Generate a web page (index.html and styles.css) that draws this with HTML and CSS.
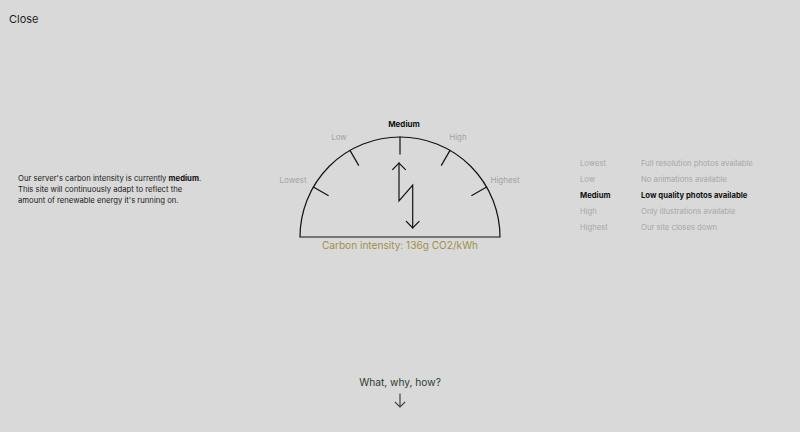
FILE: index.html
```html
<!DOCTYPE html>
<html lang="en">
<head>
<meta charset="utf-8">
<title>Carbon intensity</title>
<link rel="stylesheet" href="styles.css">
</head>
<body>
<div class="page">
  <header class="top">
    <a class="close" href="#">Close</a>
  </header>
  <main class="main">
    <section class="intro">
      <p>Our server's carbon intensity is currently <b>medium</b>.<br>This site will continuously adapt to reflect the<br>amount of renewable energy it's running on.</p>
    </section>
    <section class="gauge">
      <svg class="gauge-svg" width="260" height="140" viewBox="0 0 260 140" xmlns="http://www.w3.org/2000/svg">
        <g fill="none" stroke="#111" stroke-width="1.2" stroke-linecap="square">
          <path d="M30 125 A100 100 0 0 1 230 125 Z"/>
          <line x1="130" y1="25" x2="130" y2="42"/>
          <line x1="43.4" y1="75" x2="58.1" y2="83.5"/>
          <line x1="80" y1="38.4" x2="88.5" y2="53.1"/>
          <line x1="180" y1="38.4" x2="171.5" y2="53.1"/>
          <line x1="216.6" y1="75" x2="201.9" y2="83.5"/>
          <polyline points="129,51 129,89 142.7,73 142.7,116" stroke-linejoin="miter"/>
          <polyline points="122.7,57.5 129,51 135.3,57.5"/>
          <polyline points="136.4,109.5 142.7,116 149,109.5"/>
        </g>
        <g class="lbl" text-anchor="middle">
          <text x="134" y="15" class="on">Medium</text>
          <text x="69" y="28">Low</text>
          <text x="188" y="28">High</text>
          <text x="23" y="71">Lowest</text>
          <text x="235" y="71">Highest</text>
        </g>
        <text class="intensity" x="130" y="136.5" text-anchor="middle">Carbon intensity: 136g CO2/kWh</text>
      </svg>
    </section>
    <section class="levels">
      <ul class="level-list">
        <li><span class="lv">Lowest</span><span class="ds">Full resolution photos available</span></li>
        <li><span class="lv">Low</span><span class="ds">No animations available</span></li>
        <li class="current"><span class="lv">Medium</span><span class="ds">Low quality photos available</span></li>
        <li><span class="lv">High</span><span class="ds">Only illustrations available</span></li>
        <li><span class="lv">Highest</span><span class="ds">Our site closes down</span></li>
      </ul>
    </section>
  </main>
  <footer class="more">
    <a href="#" class="more-link">What, why, how?</a>
    <svg class="down" width="12" height="15" viewBox="0 0 12 15" xmlns="http://www.w3.org/2000/svg">
      <g fill="none" stroke="#2e3a34" stroke-width="1.1">
        <line x1="6" y1="0.5" x2="6" y2="14"/>
        <polyline points="0.8,8.8 6,14 11.2,8.8"/>
      </g>
    </svg>
  </footer>
</div>
</body>
</html>
```

FILE: styles.css
```css
* { box-sizing: border-box; }
html, body { margin: 0; padding: 0; }
body {
  background: #d9d9d9;
  font-family: Inter, "Liberation Sans", sans-serif;
  color: #1d1d1d;
  width: 800px;
  height: 432px;
  overflow: hidden;
}
.page {
  display: flex;
  flex-direction: column;
  height: 432px;
}
.top {
  padding: 7px 9px 0;
  height: 112px;
}
.close {
  font-size: 11px;
  color: #1d1d1d;
  text-decoration: none;
}
.main {
  display: grid;
  grid-template-columns: 270px 260px 270px;
  align-items: start;
}
.intro {
  padding: 61px 0 0 18px;
}
.intro p {
  margin: 0;
  font-size: 7.7px;
  line-height: 11px;
  color: #222;
}
.intro b { font-weight: 700; color: #111; }
.gauge-svg { display: block; }
.lbl text {
  font-family: Inter, "Liberation Sans", sans-serif;
  font-size: 8px;
  fill: #a3a3a3;
}
.lbl text.on { fill: #111; font-weight: 700; }
.intensity {
  font-family: Inter, "Liberation Sans", sans-serif;
  font-size: 10.1px;
  fill: #9e914c;
}
.levels { padding: 44px 0 0 50px; }
.level-list {
  list-style: none;
  margin: 0;
  padding: 0;
}
.level-list li {
  display: flex;
  height: 16px;
  line-height: 16px;
  font-size: 7.7px;
  color: #a8a8a8;
}
.level-list .lv { width: 61px; }
.level-list li.current { color: #111; font-weight: 700; }
.more {
  margin-top: auto;
  padding-bottom: 24px;
  display: flex;
  flex-direction: column;
  align-items: center;
  gap: 5px;
}
.more-link {
  font-size: 10.2px;
  color: #2c3d33;
  text-decoration: none;
}
.down { display: block; }
```
